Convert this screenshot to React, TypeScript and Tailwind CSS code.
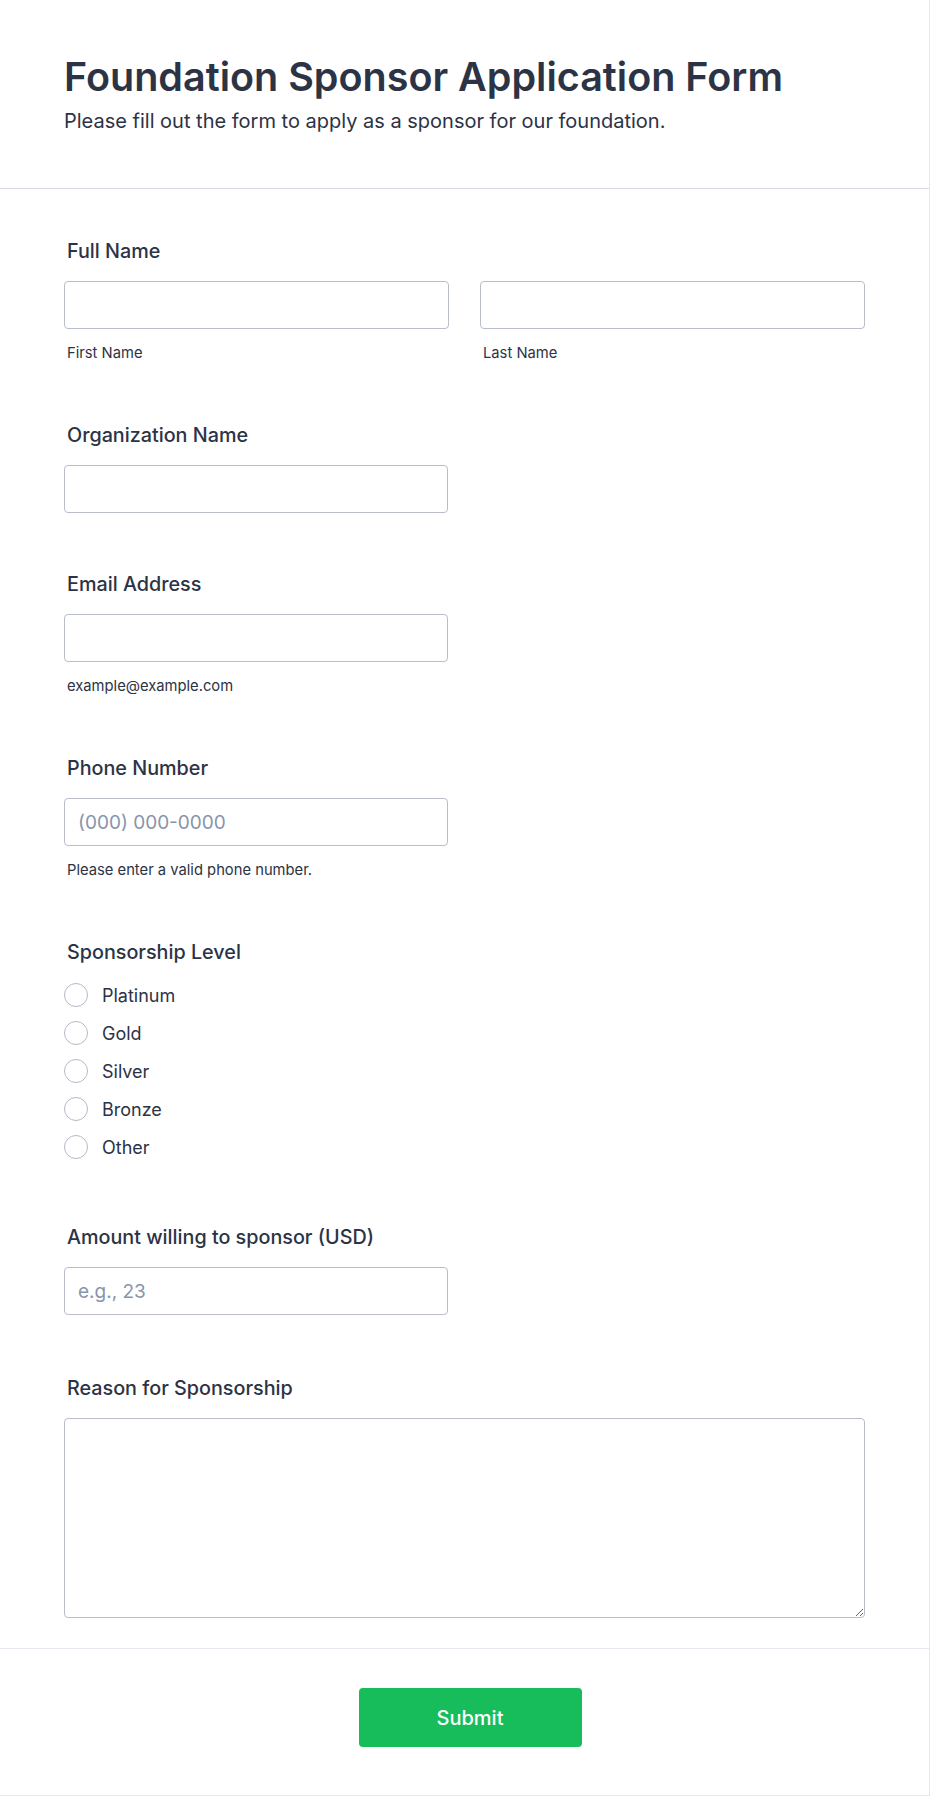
import React from 'react'

const font = { fontFamily: 'Inter, "Noto Sans", sans-serif' }

const Label = ({ children }: { children: React.ReactNode }) => (
  <label className="block pl-[3px] text-[19.75px] leading-[27px] font-medium text-[#2c3345]">
    {children}
  </label>
)

const SubLabel = ({ children }: { children: React.ReactNode }) => (
  <span className="block pl-[3px] mt-[14px] text-[14.75px] leading-[21px] text-[#2c3345]">
    {children}
  </span>
)

const inputCls =
  'block h-[48px] rounded-[4px] border border-[#b8bdc9] bg-white px-[13px] text-[19px] text-[#2c3345] placeholder:text-[#8894ab] outline-none'

const levels = ['Platinum', 'Gold', 'Silver', 'Bronze', 'Other']

const App = () => {
  return (
    <div className="w-full bg-white border-r border-b border-[#e6e8ef]" style={font}>
      {/* Header */}
      <div className="px-16 pt-[53px] pb-[53px] border-b border-[#d9dbe6]">
        <h1 className="text-[39.5px] leading-[48px] font-semibold text-[#2c3345]">
          Foundation Sponsor Application Form
        </h1>
        <p className="mt-[6px] text-[20px] leading-[28px] text-[#2c3345]">
          Please fill out the form to apply as a sponsor for our foundation.
        </p>
      </div>

      {/* Fields */}
      <div className="px-16 pt-[49px] pb-[30px] flex flex-col gap-[58px]">
        {/* Full Name */}
        <div>
          <Label>Full Name</Label>
          <div className="mt-4 grid grid-cols-2 gap-[31px]">
            <div>
              <input className={`${inputCls} w-full`} />
              <SubLabel>First Name</SubLabel>
            </div>
            <div>
              <input className={`${inputCls} w-full`} />
              <SubLabel>Last Name</SubLabel>
            </div>
          </div>
        </div>

        {/* Organization */}
        <div>
          <Label>Organization Name</Label>
          <input className={`${inputCls} mt-4 w-[384px]`} />
        </div>

        {/* Email */}
        <div>
          <Label>Email Address</Label>
          <input className={`${inputCls} mt-4 w-[384px]`} />
          <SubLabel>example@example.com</SubLabel>
        </div>

        {/* Phone */}
        <div>
          <Label>Phone Number</Label>
          <input className={`${inputCls} mt-4 w-[384px]`} placeholder="(000) 000-0000" />
          <SubLabel>Please enter a valid phone number.</SubLabel>
        </div>

        {/* Sponsorship Level */}
        <div>
          <Label>Sponsorship Level</Label>
          <div className="mt-[10px] flex flex-col">
            {levels.map((l) => (
              <div key={l} className="flex items-center h-[38px]">
                <span className="w-[24px] h-[24px] rounded-full border-[1.5px] border-[#b3b9c6] bg-white" />
                <span className="ml-[14px] text-[18px] text-[#2c3345]">{l}</span>
              </div>
            ))}
          </div>
        </div>

        {/* Amount */}
        <div>
          <Label>Amount willing to sponsor (USD)</Label>
          <input className={`${inputCls} mt-4 w-[384px]`} placeholder="e.g., 23" />
        </div>

        {/* Reason */}
        <div className="mt-[2px]">
          <Label>Reason for Sponsorship</Label>
          <textarea className="mt-4 block w-full h-[200px] rounded-[4px] border border-[#b8bdc9] bg-white p-3 text-[18px] text-[#2c3345] outline-none" />
        </div>
      </div>

      {/* Footer */}
      <div className="border-t border-[#e8e9f0] pt-[39px] pb-[48px] flex justify-center pl-[11px]">
        <button className="w-[223px] h-[59px] rounded-[4px] bg-[#18bd5b] text-white text-[20px] font-medium">
          Submit
        </button>
      </div>
    </div>
  )
}

export default App
